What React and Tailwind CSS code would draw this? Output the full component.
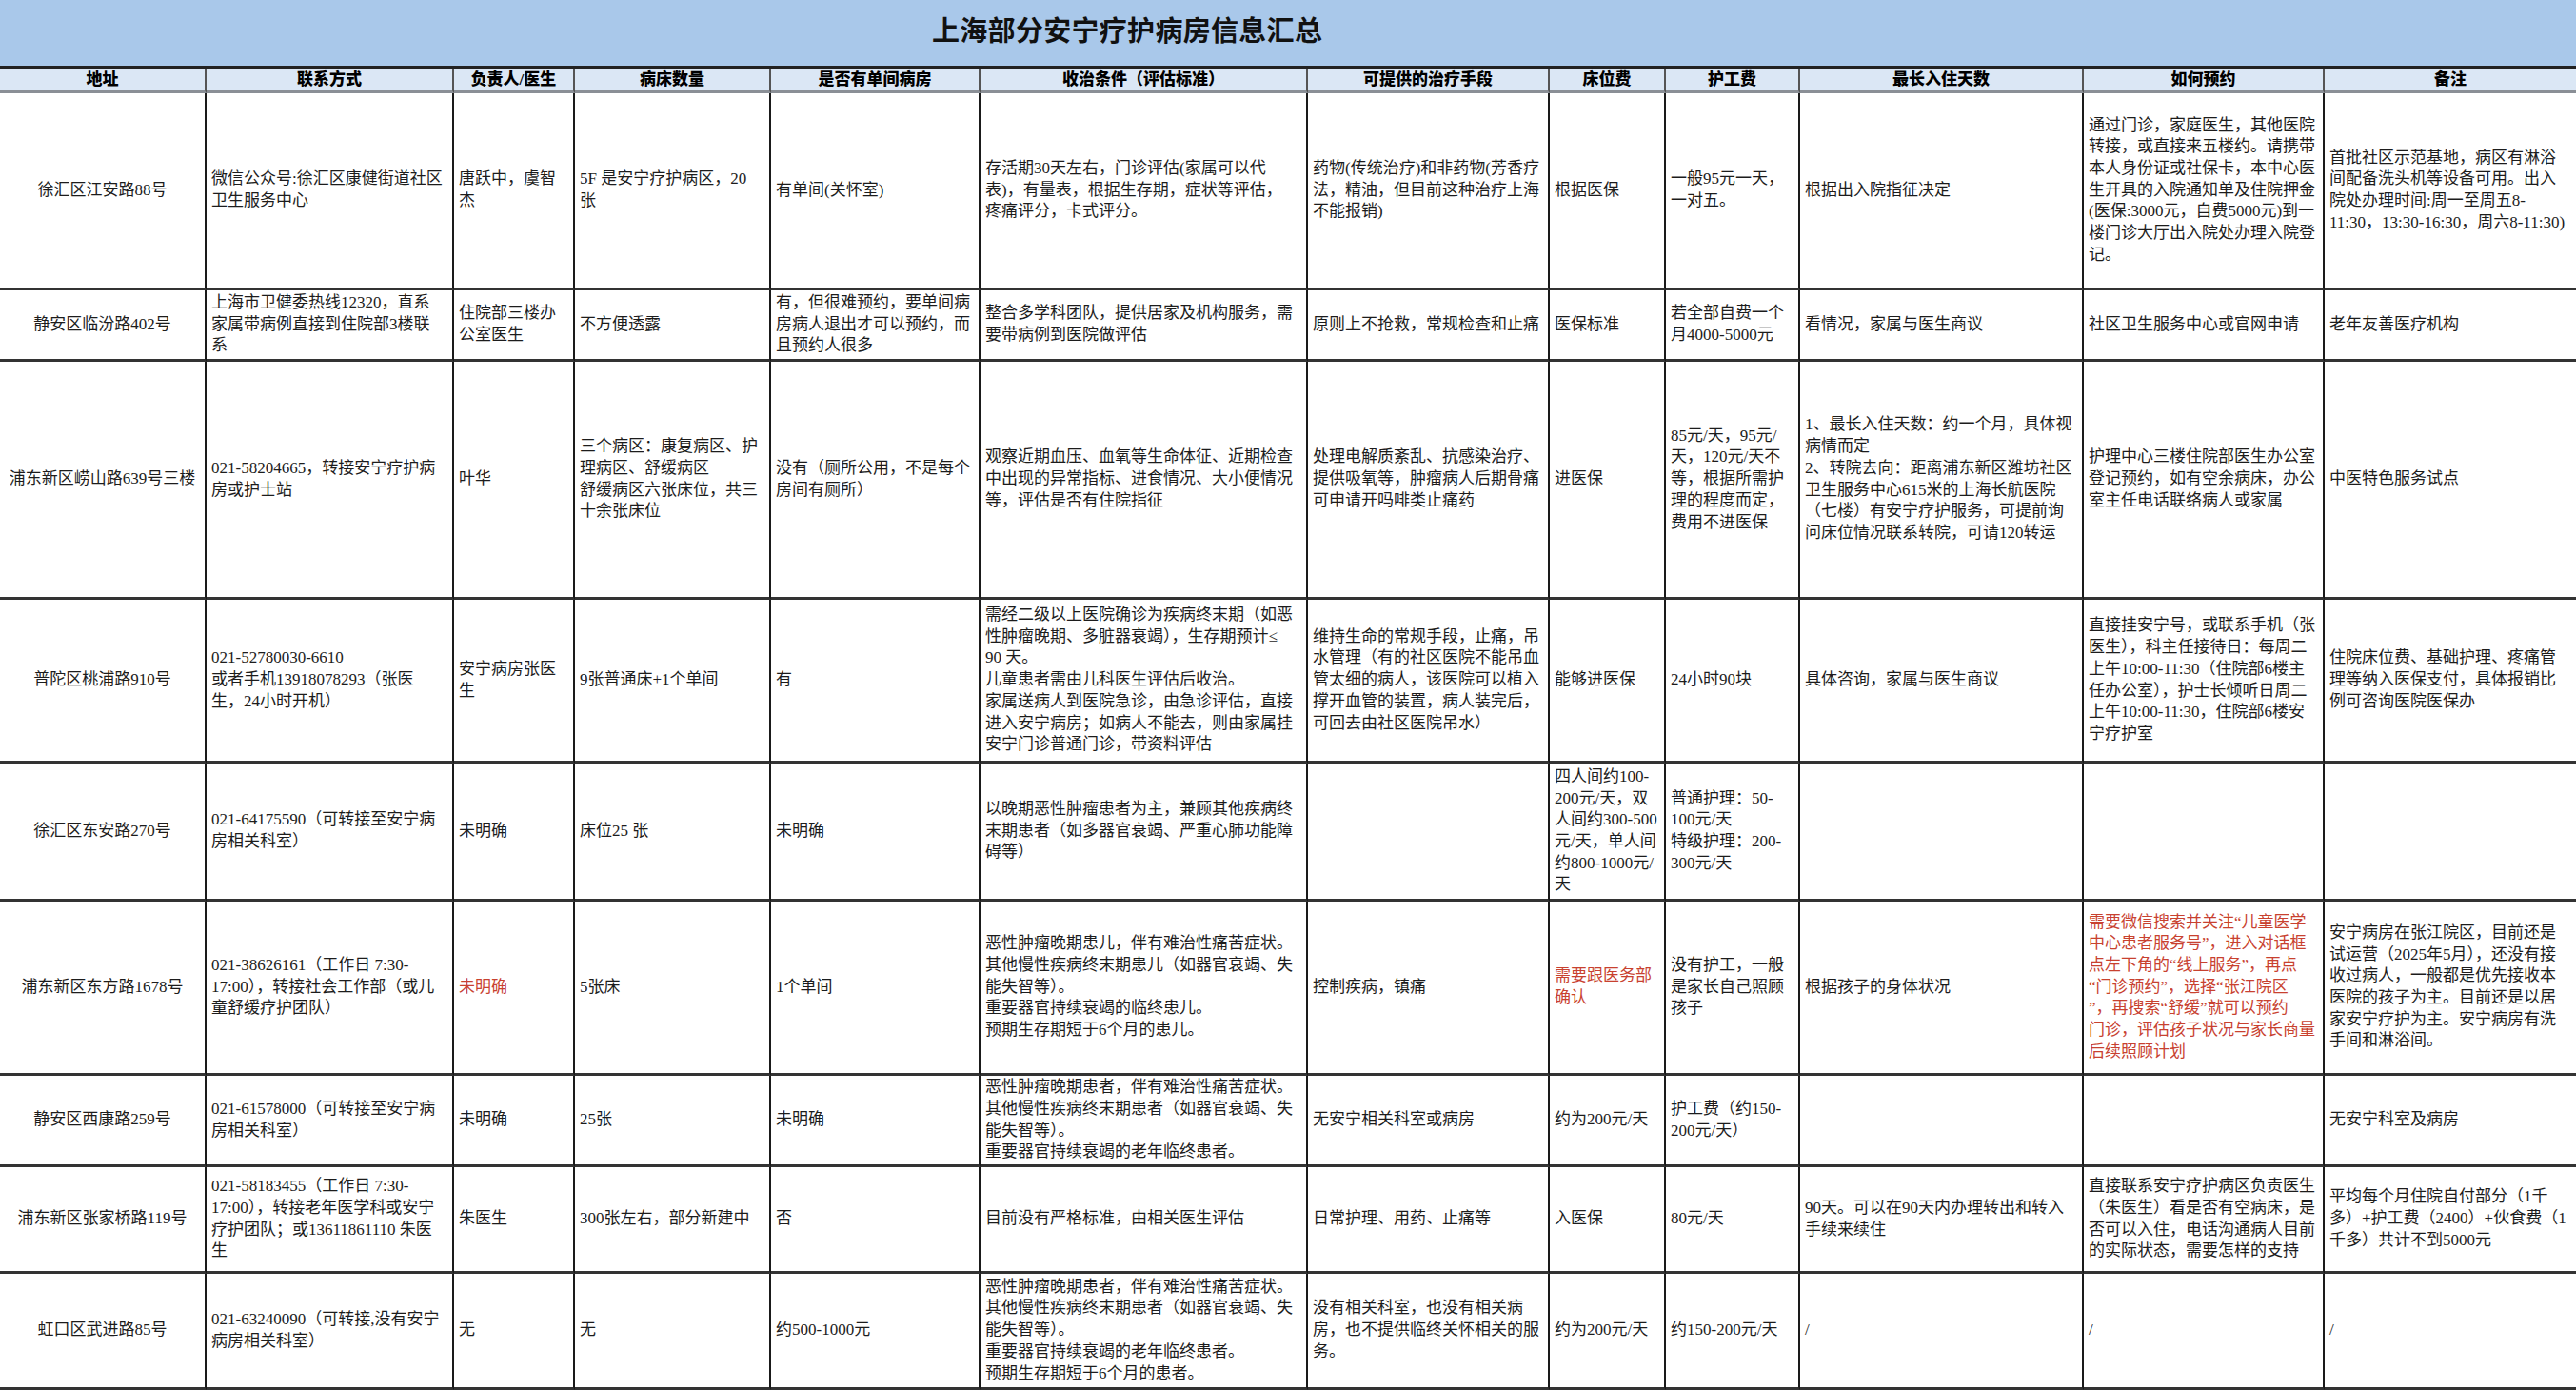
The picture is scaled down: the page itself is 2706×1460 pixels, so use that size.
import React from "react";

const headers = ["地址", "联系方式", "负责人/医生", "病床数量", "是否有单间病房", "收治条件（评估标准）", "可提供的治疗手段", "床位费", "护工费", "最长入住天数", "如何预约", "备注"];

const R = (t) => ({ t, red: true });

const rows = [
  [
    "徐汇区江安路88号",
    "微信公众号:徐汇区康健街道社区\n卫生服务中心",
    "唐跃中，虞智\n杰",
    "5F 是安宁疗护病区，20\n张",
    "有单间(关怀室)",
    "存活期30天左右，门诊评估(家属可以代\n表)，有量表，根据生存期，症状等评估，\n疼痛评分，卡式评分。",
    "药物(传统治疗)和非药物(芳香疗\n法，精油，但目前这种治疗上海\n不能报销)",
    "根据医保",
    "一般95元一天，\n一对五。",
    "根据出入院指征决定",
    "通过门诊，家庭医生，其他医院\n转接，或直接来五楼约。请携带\n本人身份证或社保卡，本中心医\n生开具的入院通知单及住院押金\n(医保:3000元，自费5000元)到一\n楼门诊大厅出入院处办理入院登\n记。",
    "首批社区示范基地，病区有淋浴\n间配备洗头机等设备可用。出入\n院处办理时间:周一至周五8-\n11:30，13:30-16:30，周六8-11:30)",
  ],
  [
    "静安区临汾路402号",
    "上海市卫健委热线12320，直系\n家属带病例直接到住院部3楼联\n系",
    "住院部三楼办\n公室医生",
    "不方便透露",
    "有，但很难预约，要单间病\n房病人退出才可以预约，而\n且预约人很多",
    "整合多学科团队，提供居家及机构服务，需\n要带病例到医院做评估",
    "原则上不抢救，常规检查和止痛",
    "医保标准",
    "若全部自费一个\n月4000-5000元",
    "看情况，家属与医生商议",
    "社区卫生服务中心或官网申请",
    "老年友善医疗机构",
  ],
  [
    "浦东新区崂山路639号三楼",
    "021-58204665，转接安宁疗护病\n房或护士站",
    "叶华",
    "三个病区：康复病区、护\n理病区、舒缓病区\n舒缓病区六张床位，共三\n十余张床位",
    "没有（厕所公用，不是每个\n房间有厕所）",
    "观察近期血压、血氧等生命体征、近期检查\n中出现的异常指标、进食情况、大小便情况\n等，评估是否有住院指征",
    "处理电解质紊乱、抗感染治疗、\n提供吸氧等，肿瘤病人后期骨痛\n可申请开吗啡类止痛药",
    "进医保",
    "85元/天，95元/\n天，120元/天不\n等，根据所需护\n理的程度而定，\n费用不进医保",
    "1、最长入住天数：约一个月，具体视\n病情而定\n2、转院去向：距离浦东新区潍坊社区\n卫生服务中心615米的上海长航医院\n（七楼）有安宁疗护服务，可提前询\n问床位情况联系转院，可请120转运",
    "护理中心三楼住院部医生办公室\n登记预约，如有空余病床，办公\n室主任电话联络病人或家属",
    "中医特色服务试点",
  ],
  [
    "普陀区桃浦路910号",
    "021-52780030-6610\n或者手机13918078293（张医\n生，24小时开机）",
    "安宁病房张医\n生",
    "9张普通床+1个单间",
    "有",
    "需经二级以上医院确诊为疾病终末期（如恶\n性肿瘤晚期、多脏器衰竭），生存期预计≤\n90 天。\n儿童患者需由儿科医生评估后收治。\n家属送病人到医院急诊，由急诊评估，直接\n进入安宁病房；如病人不能去，则由家属挂\n安宁门诊普通门诊，带资料评估",
    "维持生命的常规手段，止痛，吊\n水管理（有的社区医院不能吊血\n管太细的病人，该医院可以植入\n撑开血管的装置，病人装完后，\n可回去由社区医院吊水）",
    "能够进医保",
    "24小时90块",
    "具体咨询，家属与医生商议",
    "直接挂安宁号，或联系手机（张\n医生），科主任接待日：每周二\n上午10:00-11:30（住院部6楼主\n任办公室），护士长倾听日周二\n上午10:00-11:30，住院部6楼安\n宁疗护室",
    "住院床位费、基础护理、疼痛管\n理等纳入医保支付，具体报销比\n例可咨询医院医保办",
  ],
  [
    "徐汇区东安路270号",
    "021-64175590（可转接至安宁病\n房相关科室）",
    "未明确",
    "床位25 张",
    "未明确",
    "以晚期恶性肿瘤患者为主，兼顾其他疾病终\n末期患者（如多器官衰竭、严重心肺功能障\n碍等）",
    "",
    "四人间约100-\n200元/天，双\n人间约300-500\n元/天，单人间\n约800-1000元/\n天",
    "普通护理：50-\n100元/天\n特级护理：200-\n300元/天",
    "",
    "",
    "",
  ],
  [
    "浦东新区东方路1678号",
    "021-38626161（工作日 7:30-\n17:00），转接社会工作部（或儿\n童舒缓疗护团队）",
    R("未明确"),
    "5张床",
    "1个单间",
    "恶性肿瘤晚期患儿，伴有难治性痛苦症状。\n其他慢性疾病终末期患儿（如器官衰竭、失\n能失智等）。\n重要器官持续衰竭的临终患儿。\n预期生存期短于6个月的患儿。",
    "控制疾病，镇痛",
    R("需要跟医务部\n确认"),
    "没有护工，一般\n是家长自己照顾\n孩子",
    "根据孩子的身体状况",
    R("需要微信搜索并关注“儿童医学\n中心患者服务号”，进入对话框\n点左下角的“线上服务”，再点\n“门诊预约”，选择“张江院区\n”，再搜索“舒缓”就可以预约\n门诊，评估孩子状况与家长商量\n后续照顾计划"),
    "安宁病房在张江院区，目前还是\n试运营（2025年5月），还没有接\n收过病人，一般都是优先接收本\n医院的孩子为主。目前还是以居\n家安宁疗护为主。安宁病房有洗\n手间和淋浴间。",
  ],
  [
    "静安区西康路259号",
    "021-61578000（可转接至安宁病\n房相关科室）",
    "未明确",
    "25张",
    "未明确",
    "恶性肿瘤晚期患者，伴有难治性痛苦症状。\n其他慢性疾病终末期患者（如器官衰竭、失\n能失智等）。\n重要器官持续衰竭的老年临终患者。",
    "无安宁相关科室或病房",
    "约为200元/天",
    "护工费（约150-\n200元/天）",
    "",
    "",
    "无安宁科室及病房",
  ],
  [
    "浦东新区张家桥路119号",
    "021-58183455（工作日 7:30-\n17:00），转接老年医学科或安宁\n疗护团队；或13611861110 朱医\n生",
    "朱医生",
    "300张左右，部分新建中",
    "否",
    "目前没有严格标准，由相关医生评估",
    "日常护理、用药、止痛等",
    "入医保",
    "80元/天",
    "90天。可以在90天内办理转出和转入\n手续来续住",
    "直接联系安宁疗护病区负责医生\n（朱医生）看是否有空病床，是\n否可以入住，电话沟通病人目前\n的实际状态，需要怎样的支持",
    "平均每个月住院自付部分（1千\n多）+护工费（2400）+伙食费（1\n千多）共计不到5000元",
  ],
  [
    "虹口区武进路85号",
    "021-63240090（可转接,没有安宁\n病房相关科室）",
    "无",
    "无",
    "约500-1000元",
    "恶性肿瘤晚期患者，伴有难治性痛苦症状。\n其他慢性疾病终末期患者（如器官衰竭、失\n能失智等）。\n重要器官持续衰竭的老年临终患者。\n预期生存期短于6个月的患者。",
    "没有相关科室，也没有相关病\n房，也不提供临终关怀相关的服\n务。",
    "约为200元/天",
    "约150-200元/天",
    "/",
    "/",
    "/",
  ],
];

function Cell({ value, col, last }) {
  const red = typeof value === "object" && value !== null;
  const text = red ? value.t : value;
  const base =
    "flex items-center overflow-hidden border-b-[3px] border-b-[#333] " +
    (last ? "" : "border-r-2 border-r-[#1a1a1a] ");
  if (col === 0) {
    return (
      <div className={base + "justify-center"}>
        <div className="whitespace-pre leading-[22.7px] text-[#1c1c1c]">{text}</div>
      </div>
    );
  }
  return (
    <div className={base + "pl-[5px]"}>
      <div className={"whitespace-pre leading-[22.7px] " + (red ? "text-[#c8412f]" : "text-[#1c1c1c]")}>{text}</div>
    </div>
  );
}

export default function App() {
  return (
    <div className="w-[2706px] h-[1460px] overflow-hidden bg-white font-['Liberation_Serif','Noto_Sans_CJK_SC',serif] text-[17px]">
      <div className="h-[72px] bg-[#a9c8ea] border-b-[3px] border-b-[#222] flex items-center pl-[979px] pb-[2px]">
        <h1 className="text-[29px] font-bold text-[#111] tracking-[0.3px]">上海部分安宁疗护病房信息汇总</h1>
      </div>
      <div className="grid grid-cols-[217px_260px_127px_206px_220px_344px_254px_122px_141px_298px_253px_264px] grid-rows-[26px_207px_75px_250px_172px_145px_183px_96px_112px_122px]">
        {headers.map((h, i) => (
          <div
            key={"h" + i}
            className={
              "flex items-center justify-center bg-[#dbe7f5] border-b-[3px] border-b-[#8a8f96] text-[17px] font-black text-[#000] leading-none " +
              (i === headers.length - 1 ? "" : "border-r-2 border-r-[#555]")
            }
          >
            {h}
          </div>
        ))}
        {rows.map((row, r) =>
          row.map((v, c) => <Cell key={r + "-" + c} value={v} col={c} last={c === row.length - 1} />)
        )}
      </div>
    </div>
  );
}
